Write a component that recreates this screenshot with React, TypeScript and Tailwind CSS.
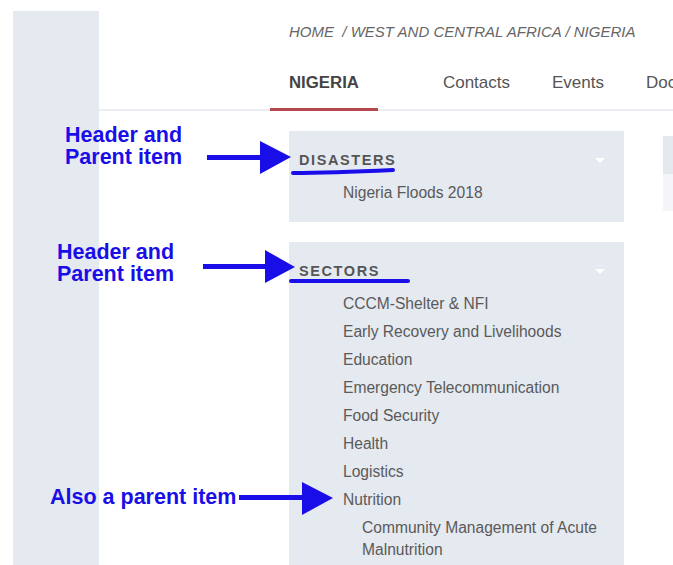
import React from "react";

const disasters = ["Nigeria Floods 2018"];

const sectors = [
  "CCCM-Shelter & NFI",
  "Early Recovery and Livelihoods",
  "Education",
  "Emergency Telecommunication",
  "Food Security",
  "Health",
  "Logistics",
];

function Caret() {
  return <span className="block w-0 h-0 border-x-[5px] border-x-transparent border-t-[5px] border-t-white" />;
}

function MenuBlock({ title, children }: { title: string; children: React.ReactNode }) {
  return (
    <div className="bg-[#e5e9f0] pt-[19px] pb-[15px]">
      <div className="flex items-center justify-between pl-[10px] pr-[19px]">
        <span className="text-[14.5px] leading-[20px] font-bold tracking-[1.6px] text-[#555]">{title}</span>
        <Caret />
      </div>
      <ul className="mt-[9px] pl-[54px] pr-[20px] text-[15.6px] text-[#5a5a5a]">{children}</ul>
    </div>
  );
}

function Item({ label }: { label: string }) {
  return <li className="py-[3px] leading-[22px]">{label}</li>;
}

// notes drawn over the menu
function Notes() {
  const blue = "#1a0ee8";
  return (
    <>
      <div className="absolute left-[65px] top-[124px] text-[21.5px] leading-[22px] font-bold text-[#1a0ee8]">
        Header and
        <br />
        Parent item
      </div>
      <div className="absolute left-[57px] top-[241px] text-[21.5px] leading-[22px] font-bold text-[#1a0ee8]">
        Header and
        <br />
        Parent item
      </div>
      <div className="absolute left-[50px] top-[486px] text-[21.5px] leading-[22px] font-bold text-[#1a0ee8]">
        Also a parent item
      </div>
      <svg className="absolute left-0 top-0 pointer-events-none" width="673" height="565">
        <rect x="207" y="155" width="56" height="5" fill={blue} />
        <polygon points="260,141 291,157 260,174" fill={blue} />
        <rect x="203" y="264" width="64" height="5" fill={blue} />
        <polygon points="265,250 295,267 265,283" fill={blue} />
        <rect x="239" y="495" width="65" height="5" fill={blue} />
        <polygon points="302,482 333,498 302,515" fill={blue} />
        <path d="M293 173 Q 330 173 393 170" stroke={blue} strokeWidth="4" strokeLinecap="round" fill="none" />
        <path d="M291 281 L 408 281" stroke={blue} strokeWidth="4" strokeLinecap="round" fill="none" />
      </svg>
    </>
  );
}

export default function App() {
  return (
    <div className="relative w-[673px] h-[565px] overflow-hidden bg-white flex font-['Liberation_Sans',Arial,sans-serif]">
      <div className="ml-[13px] mt-[11px] w-[86px] shrink-0 bg-[#e5e9f0]" />

      <div className="flex-1 flex flex-col min-w-0">
        <header className="border-b-2 border-[#e9ecf0]">
          <nav className="pl-[190px] pt-[22px] text-[15px] leading-[20px] italic text-[#666] whitespace-nowrap">
            HOME&nbsp; / WEST AND CENTRAL AFRICA / NIGERIA
          </nav>
          <ul className="flex pl-[171px] mt-[29px] text-[17px] leading-[24px] text-[#555] whitespace-nowrap">
            <li className="px-[19px] pb-[13px] -mb-[2px] border-b-[3px] border-[#b5474f] font-bold text-[16.8px] text-[#444]">
              NIGERIA
            </li>
            <li className="ml-[44px] px-[21px] pb-[13px]">Contacts</li>
            <li className="px-[21px] pb-[13px]">Events</li>
            <li className="px-[21px] pb-[13px]">Documents</li>
          </ul>
        </header>

        <div className="flex pl-[190px] pt-[20px]">
          <div className="w-[335px] shrink-0 flex flex-col gap-[20px]">
            <MenuBlock title="DISASTERS">
              {disasters.map((d) => (
                <Item key={d} label={d} />
              ))}
            </MenuBlock>
            <MenuBlock title="SECTORS">
              {sectors.map((s) => (
                <Item key={s} label={s} />
              ))}
              <li className="py-[3px] leading-[22px]">
                Nutrition
                <ul className="pl-[19px] pt-[6px]">
                  <li className="leading-[22px]">Community Management of Acute Malnutrition</li>
                </ul>
              </li>
            </MenuBlock>
          </div>
          <div className="ml-[39px] mt-[5px] w-[10px] shrink-0">
            <div className="h-[38px] bg-[#e4e8ee]" />
            <div className="h-[37px] bg-[#f3f5f8]" />
          </div>
        </div>
      </div>

      <Notes />
    </div>
  );
}
